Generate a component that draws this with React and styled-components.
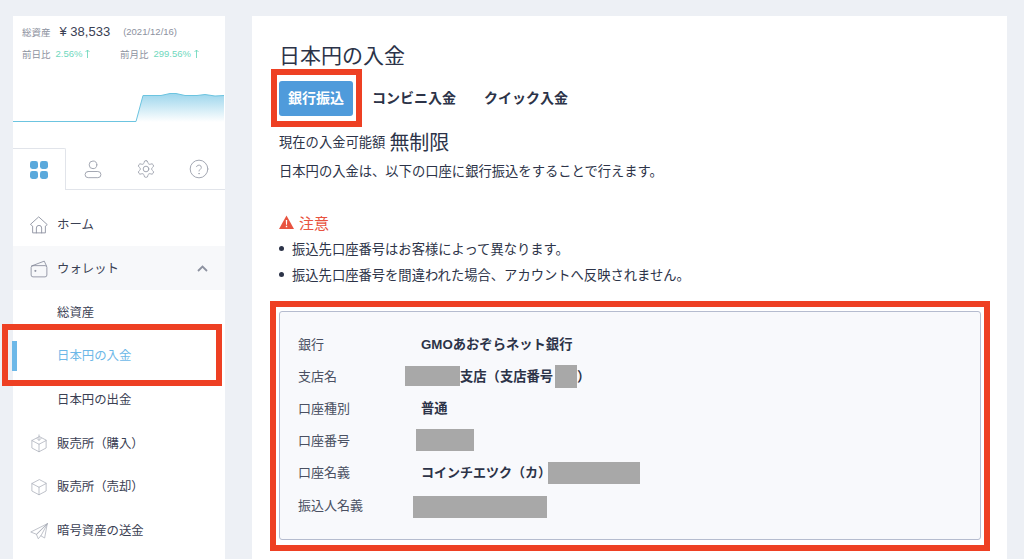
import styled, { createGlobalStyle } from "styled-components";

const Global = createGlobalStyle`
  html, body {
    margin: 0;
    padding: 0;
    background: #edf0f5;
  }
  body {
    font-family: "Liberation Sans", "Noto Sans CJK JP", sans-serif;
    color: #2c3348;
  }
`;

const Page = styled.div`
  position: relative;
  display: flex;
  gap: 27px;
  height: 559px;
  padding: 16px 17px 0 13px;
  box-sizing: border-box;
  overflow: hidden;
`;

const Sidebar = styled.aside`
  width: 212px;
  flex: none;
  background: #fff;
`;

const Summary = styled.div`
  height: 132px;
  padding: 8px 0 0 9px;
  box-sizing: border-box;
`;

const TotalRow = styled.div`
  display: flex;
  align-items: center;
  height: 15px;
`;

const Muted = styled.span`
  font-size: 9.5px;
  color: #8d92a0;
  margin-right: ${(props) => props.$gap || 0}px;
`;

const Amount = styled.span`
  font-size: 13px;
  color: #3a4053;
  margin-right: 13px;
`;

const RateRow = styled.div`
  display: flex;
  align-items: center;
  height: 15px;
  margin-top: 7px;
`;

const Rate = styled.div`
  display: flex;
  align-items: center;
  width: ${(props) => props.$width}px;
`;

const Green = styled.span`
  font-size: 9.5px;
  color: #6fd8bd;
`;

const Chart = styled.svg`
  display: block;
  width: 211px;
  height: 40px;
  margin: 29px 0 0 -9px;
`;

const Tabs = styled.div`
  display: flex;
  height: 42px;
`;

const Tab = styled.div`
  width: 53px;
  display: flex;
  align-items: center;
  justify-content: center;
  box-sizing: border-box;
  color: #a4a8b3;
  border-bottom: 1px solid #e1e4ea;
  ${(props) =>
    props.$active &&
    `
    color: #5aa9dc;
    border-top: 1px solid #e1e4ea;
    border-right: 1px solid #e1e4ea;
    border-bottom: none;
    border-top-right-radius: 2px;
  `}
`;

const Menu = styled.nav`
  margin-top: 12.5px;
`;

const Item = styled.div`
  position: relative;
  display: flex;
  align-items: center;
  height: 43.7px;
  padding-left: ${(props) => (props.$sub ? 44 : 17)}px;
  font-size: 12.4px;
  color: ${(props) => (props.$current ? "#6db8e8" : "#3a4053")};
  background: ${(props) => (props.$open ? "#f7f8fa" : "transparent")};
`;

const ItemIcon = styled.span`
  display: flex;
  width: 18px;
  height: 18px;
  margin-right: 9px;
  color: ${(props) => (props.$light ? "#a9adb8" : "#8d92a0")};
`;

const Chevron = styled.span`
  display: flex;
  margin-left: auto;
  margin-right: 17px;
  color: #8d92a0;
`;

const Marker = styled.span`
  position: absolute;
  left: -1px;
  top: 7px;
  width: 5px;
  height: 30px;
  background: #6db8e8;
`;

const Main = styled.main`
  flex: 1;
  background: #fff;
  padding: 25px 26px 0 27px;
`;

const Title = styled.h1`
  margin: 0;
  font-size: 21px;
  line-height: 30px;
  font-weight: 400;
  color: #2c3348;
`;

const Methods = styled.div`
  display: flex;
  align-items: center;
  margin-top: 10px;
`;

const ActiveMethod = styled.div`
  width: 74px;
  height: 35px;
  padding-bottom: 4px;
  box-sizing: border-box;
  display: flex;
  align-items: center;
  justify-content: center;
  margin-right: 19px;
  border-radius: 3px;
  background: #4f9bdb;
  color: #fff;
  font-size: 14px;
  font-weight: 700;
`;

const Method = styled.div`
  font-size: 14px;
  font-weight: 700;
  color: #2c3348;
  margin: 0 28px 4px 0;
`;

const Limit = styled.div`
  display: flex;
  align-items: center;
  height: 28px;
  margin-top: 11px;
  font-size: 13.3px;
`;

const LimitValue = styled.span`
  font-size: 20px;
  margin-left: 4px;
`;

const Lead = styled.p`
  margin: 7px 0 0;
  font-size: 13.3px;
  line-height: 20px;
`;

const Caution = styled.div`
  display: flex;
  align-items: center;
  gap: 5px;
  height: 20px;
  margin-top: 30px;
  font-size: 15px;
  color: #e8533f;
`;

const Notes = styled.ul`
  list-style: none;
  margin: 6px 0 0;
  padding: 0;
  display: flex;
  flex-direction: column;
  gap: 6px;
`;

const Note = styled.li`
  display: flex;
  align-items: center;
  height: 20px;
  font-size: 13.3px;
  &::before {
    content: "";
    width: 5px;
    height: 5px;
    margin-right: 8px;
    border-radius: 50%;
    background: #2c3348;
  }
`;

const Panel = styled.section`
  height: 229px;
  margin-top: 27px;
  padding: 15px 18px 0;
  box-sizing: border-box;
  background: #f8f9fc;
  border: 1px solid #b5bccf;
  border-radius: 3px;
`;

const Row = styled.div`
  display: flex;
  align-items: center;
  height: 32.2px;
  font-size: 13px;
`;

const Label = styled.div`
  width: 123px;
  flex: none;
  color: #4a5062;
`;

const Value = styled.div`
  display: flex;
  align-items: center;
  font-size: ${(props) => props.$size || 13.3}px;
  font-weight: 700;
  color: #2c3348;
`;

// grey blocks covering private details
const Mask = styled.span`
  flex: none;
  width: ${(props) => props.$w}px;
  height: ${(props) => props.$h}px;
  margin: ${(props) => props.$drop ?? 2}px 0 0 ${(props) => props.$shift || 0}px;
  background: #a8a8a8;
`;

const Highlight = styled.div`
  position: absolute;
  left: ${(props) => props.$x}px;
  top: ${(props) => props.$y}px;
  width: ${(props) => props.$w}px;
  height: ${(props) => props.$h}px;
  box-sizing: border-box;
  border: 6px solid #ee4023;
  pointer-events: none;
`;

const Line = ({ size = 18, width = 1.2, children }) => (
  <svg
    width={size}
    height={size}
    viewBox="0 0 24 24"
    fill="none"
    stroke="currentColor"
    strokeWidth={width}
    strokeLinecap="round"
    strokeLinejoin="round"
  >
    {children}
  </svg>
);

const GridIcon = () => (
  <svg width="18" height="18" viewBox="0 0 18 18" fill="currentColor">
    <rect x="0" y="0" width="8" height="8" rx="2.4" />
    <rect x="10" y="0" width="8" height="8" rx="2.4" />
    <rect x="0" y="10" width="8" height="8" rx="2.4" />
    <rect x="10" y="10" width="8" height="8" rx="2.4" />
  </svg>
);

const UserIcon = () => (
  <Line size={20}>
    <circle cx="12" cy="7" r="4.6" />
    <rect x="2.5" y="15" width="19" height="7.4" rx="3.7" />
  </Line>
);

const GearIcon = () => (
  <Line size={20}>
    <path d="M12.22 2h-.44a2 2 0 0 0-2 2v.18a2 2 0 0 1-1 1.73l-.43.25a2 2 0 0 1-2 0l-.15-.08a2 2 0 0 0-2.73.73l-.22.38a2 2 0 0 0 .73 2.73l.15.1a2 2 0 0 1 1 1.72v.51a2 2 0 0 1-1 1.74l-.15.09a2 2 0 0 0-.73 2.73l.22.38a2 2 0 0 0 2.73.73l.15-.08a2 2 0 0 1 2 0l.43.25a2 2 0 0 1 1 1.73V20a2 2 0 0 0 2 2h.44a2 2 0 0 0 2-2v-.18a2 2 0 0 1 1-1.73l.43-.25a2 2 0 0 1 2 0l.15.08a2 2 0 0 0 2.73-.73l.22-.39a2 2 0 0 0-.73-2.73l-.15-.08a2 2 0 0 1-1-1.74v-.5a2 2 0 0 1 1-1.74l.15-.09a2 2 0 0 0 .73-2.73l-.22-.38a2 2 0 0 0-2.73-.73l-.15.08a2 2 0 0 1-2 0l-.43-.25a2 2 0 0 1-1-1.73V4a2 2 0 0 0-2-2z" />
    <circle cx="12" cy="12" r="3.4" />
  </Line>
);

const HelpIcon = () => (
  <Line size={20}>
    <circle cx="12" cy="12" r="10.6" />
    <path d="M9 9.2a3 3 0 0 1 5.8 1c0 2-2.8 2.4-2.8 4.2" />
    <circle cx="12" cy="17.6" r="0.3" />
  </Line>
);

const HomeIcon = () => (
  <Line size={20}>
    <path d="M12 1.500 23 11.500 20.500 13.500 20.500 22.500H3.500V13.500L1 11.500z" />
    <path d="M8.500 22.500V16a3.500 3.500 0 0 1 7 0v6.500" />
  </Line>
);

const WalletIcon = () => (
  <Line size={20}>
    <path d="M2 8 19 1.500 22 8" />
    <rect x="1.500" y="7.500" width="21" height="15" rx="2.500" />
    <circle cx="7" cy="14.500" r="0.7" fill="currentColor" />
  </Line>
);

const BoxIcon = ({ down }) => (
  <Line size={19} width={1}>
    <path d="M12 3 2.500 8v10l9.500 5 9.500-5V8z" />
    <path d="M2.500 8l9.500 5 9.500-5M12 13v10" />
    {down && <path d="M12 0.500v7M9 5l3 3 3-3" />}
  </Line>
);

const PlaneIcon = () => (
  <Line size={19} width={1}>
    <path d="M23 3 1 14l7.500 3zM23 3 8.500 17 11 23l3.500-4zM23 3l-3.500 19-5-3" />
  </Line>
);

const ChevronUp = () => (
  <svg width="11" height="7" viewBox="0 0 11 7" fill="none" stroke="currentColor" strokeWidth="1.8">
    <path d="M1 6l4.500-4.500L10 6" />
  </svg>
);

const UpArrow = () => (
  <svg width="5" height="9" viewBox="0 0 5 9" fill="none" stroke="#6fd8bd" strokeWidth="0.9" style={{ marginLeft: 3 }}>
    <path d="M2.500 9V1M0.500 3l2-2 2 2" />
  </svg>
);

const WarningIcon = () => (
  <svg width="15" height="14" viewBox="0 0 15 14">
    <path d="M7.500 0.500 15 14H0z" fill="#e8533f" />
    <path d="M6.800 5h1.400l-.2 4.800H7zM6.800 10.800h1.400v1.400H6.800z" fill="#fff" />
  </svg>
);

const AreaChart = () => (
  <Chart viewBox="0 0 211 40">
    <defs>
      <linearGradient id="area" x1="0" y1="0" x2="0" y2="1">
        <stop offset="0" stopColor="#7cc8e6" stopOpacity="0.75" />
        <stop offset="1" stopColor="#7cc8e6" stopOpacity="0" />
      </linearGradient>
    </defs>
    <path
      d="M123 31.500 L130 5.500 L148 5.500 L157 3.500 L163 3.500 L172 5.500 L184 5.500 L192 4.500 L202 6 L211 5.500 V32 H123 Z"
      fill="url(#area)"
    />
    <path
      d="M0 31.500 H123 L130 5.500 L148 5.500 L157 3.500 L163 3.500 L172 5.500 L184 5.500 L192 4.500 L202 6 L211 5.500"
      fill="none"
      stroke="#6cc4e0"
      strokeWidth="1"
    />
  </Chart>
);

const App = () => (
  <>
    <Global />
    <Page>
      <Sidebar>
        <Summary>
          <TotalRow>
            <Muted $gap={9}>総資産</Muted>
            <Amount>¥ 38,533</Amount>
            <Muted>(2021/12/16)</Muted>
          </TotalRow>
          <RateRow>
            <Rate $width={98}>
              <Muted $gap={5}>前日比</Muted>
              <Green>2.56%</Green>
              <UpArrow />
            </Rate>
            <Rate $width={90}>
              <Muted $gap={5}>前月比</Muted>
              <Green>299.56%</Green>
              <UpArrow />
            </Rate>
          </RateRow>
          <AreaChart />
        </Summary>
        <Tabs>
          <Tab $active><GridIcon /></Tab>
          <Tab><UserIcon /></Tab>
          <Tab><GearIcon /></Tab>
          <Tab><HelpIcon /></Tab>
        </Tabs>
        <Menu>
          <Item><ItemIcon><HomeIcon /></ItemIcon>ホーム</Item>
          <Item $open>
            <ItemIcon><WalletIcon /></ItemIcon>ウォレット
            <Chevron><ChevronUp /></Chevron>
          </Item>
          <Item $sub>総資産</Item>
          <Item $sub $current><Marker />日本円の入金</Item>
          <Item $sub>日本円の出金</Item>
          <Item><ItemIcon $light><BoxIcon down /></ItemIcon>販売所（購入）</Item>
          <Item><ItemIcon $light><BoxIcon /></ItemIcon>販売所（売却）</Item>
          <Item><ItemIcon $light><PlaneIcon /></ItemIcon>暗号資産の送金</Item>
        </Menu>
      </Sidebar>
      <Main>
        <Title>日本円の入金</Title>
        <Methods>
          <ActiveMethod>銀行振込</ActiveMethod>
          <Method>コンビニ入金</Method>
          <Method>クイック入金</Method>
        </Methods>
        <Limit>現在の入金可能額<LimitValue>無制限</LimitValue></Limit>
        <Lead>日本円の入金は、以下の口座に銀行振込をすることで行えます。</Lead>
        <Caution><WarningIcon />注意</Caution>
        <Notes>
          <Note>振込先口座番号はお客様によって異なります。</Note>
          <Note>振込先口座番号を間違われた場合、アカウントへ反映されません。</Note>
        </Notes>
        <Panel>
          <Row><Label>銀行</Label><Value>GMOあおぞらネット銀行</Value></Row>
          <Row>
            <Label>支店名</Label>
            <Value>
              <Mask $w={55} $h={20} $shift={-16} />
              支店（支店番号
              <Mask $w={22} $h={23} $shift={2} />
              ）
            </Value>
          </Row>
          <Row><Label>口座種別</Label><Value>普通</Value></Row>
          <Row><Label>口座番号</Label><Value><Mask $w={58} $h={22} $shift={-5} $drop={0} /></Value></Row>
          <Row>
            <Label>口座名義</Label>
            <Value $size={13}>コインチエツク（カ）<Mask $w={92} $h={22} $shift={-3} /></Value>
          </Row>
          <Row><Label>振込人名義</Label><Value><Mask $w={134} $h={22} $shift={-8} $drop={6} /></Value></Row>
        </Panel>
      </Main>
      <Highlight $x={2} $y={324} $w={220} $h={62} />
      <Highlight $x={271} $y={69} $w={91} $h={58} />
      <Highlight $x={270} $y={301} $w={720} $h={250} />
    </Page>
  </>
);

export default App;
